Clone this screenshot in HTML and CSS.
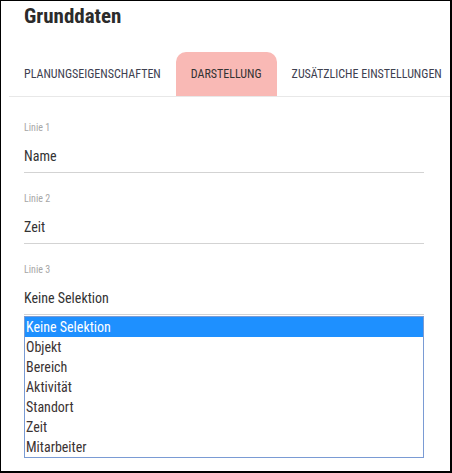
FILE: index.html
```html
<!DOCTYPE html>
<html lang="de">
<head>
    <meta charset="UTF-8">
    <title>Grunddaten</title>
    <link rel="stylesheet" href="styles.css">
</head>
<body>
    <div class="panel">
        <h1 class="title">Grunddaten</h1>

        <div class="tabs">
            <div class="tab">Planungseigenschaften</div>
            <div class="tab active">Darstellung</div>
            <div class="tab">Zusätzliche Einstellungen</div>
        </div>

        <div class="content">
            <div class="field">
                <div class="field-label">Linie 1</div>
                <div class="field-value">Name</div>
            </div>
            <div class="field">
                <div class="field-label">Linie 2</div>
                <div class="field-value">Zeit</div>
            </div>
            <div class="field">
                <div class="field-label">Linie 3</div>
                <div class="field-value">Keine Selektion</div>
            </div>

            <!-- open dropdown list for Linie 3 -->
            <ul class="listbox">
                <li class="selected">Keine Selektion</li>
                <li>Objekt</li>
                <li>Bereich</li>
                <li>Aktivität</li>
                <li>Standort</li>
                <li>Zeit</li>
                <li>Mitarbeiter</li>
            </ul>
        </div>
    </div>
</body>
</html>
```
FILE: styles.css
```css
body {
    margin: 0;
    font-family: "Roboto Condensed", Roboto, sans-serif;
    background: #fff;
}
.panel {
    box-sizing: border-box;
    width: 452px;
    height: 473px;
    border: 1px solid #000;
    border-right-width: 2px;
    border-bottom-width: 2px;
    overflow: hidden;
}
.title {
    margin: 3px 0 0 23px;
    font-size: 21px;
    line-height: 25px;
    font-weight: 700;
    color: #2b2b2b;
}
.tabs {
    display: flex;
    margin: 23px 0 0 8px;
    border-bottom: 1px solid #e8e8e8;
}
.tab {
    flex-shrink: 0;
    height: 44px;
    padding: 0 15px;
    display: flex;
    align-items: center;
    white-space: nowrap;
    font-size: 12px;
    text-transform: uppercase;
    color: #3e4150;
    border-radius: 10px 10px 0 0;
}
.tab.active {
    background-color: #f9b9b5;
    color: #333;
}
.content {
    padding: 24px 0 0 23px;
}
.field {
    width: 400px;
    margin-bottom: 19px;
}
.field:last-of-type {
    margin-bottom: 1px;
}
.field-label {
    font-size: 10px;
    line-height: 14px;
    color: #a6a6a6;
    margin-bottom: 11px;
}
.field-value {
    font-size: 14px;
    line-height: 20px;
    color: #333;
    padding-bottom: 6px;
    border-bottom: 1px solid #d3d3d3;
}
.listbox {
    box-sizing: border-box;
    width: 400px;
    margin: 0;
    padding: 0;
    list-style: none;
    border: 1px solid #7a9bd4;
}
.listbox li {
    font-size: 14px;
    line-height: 20px;
    padding-left: 1px;
    color: #3b3333;
}
.listbox li.selected {
    background-color: #1e90ff;
    color: #fff;
}
```
